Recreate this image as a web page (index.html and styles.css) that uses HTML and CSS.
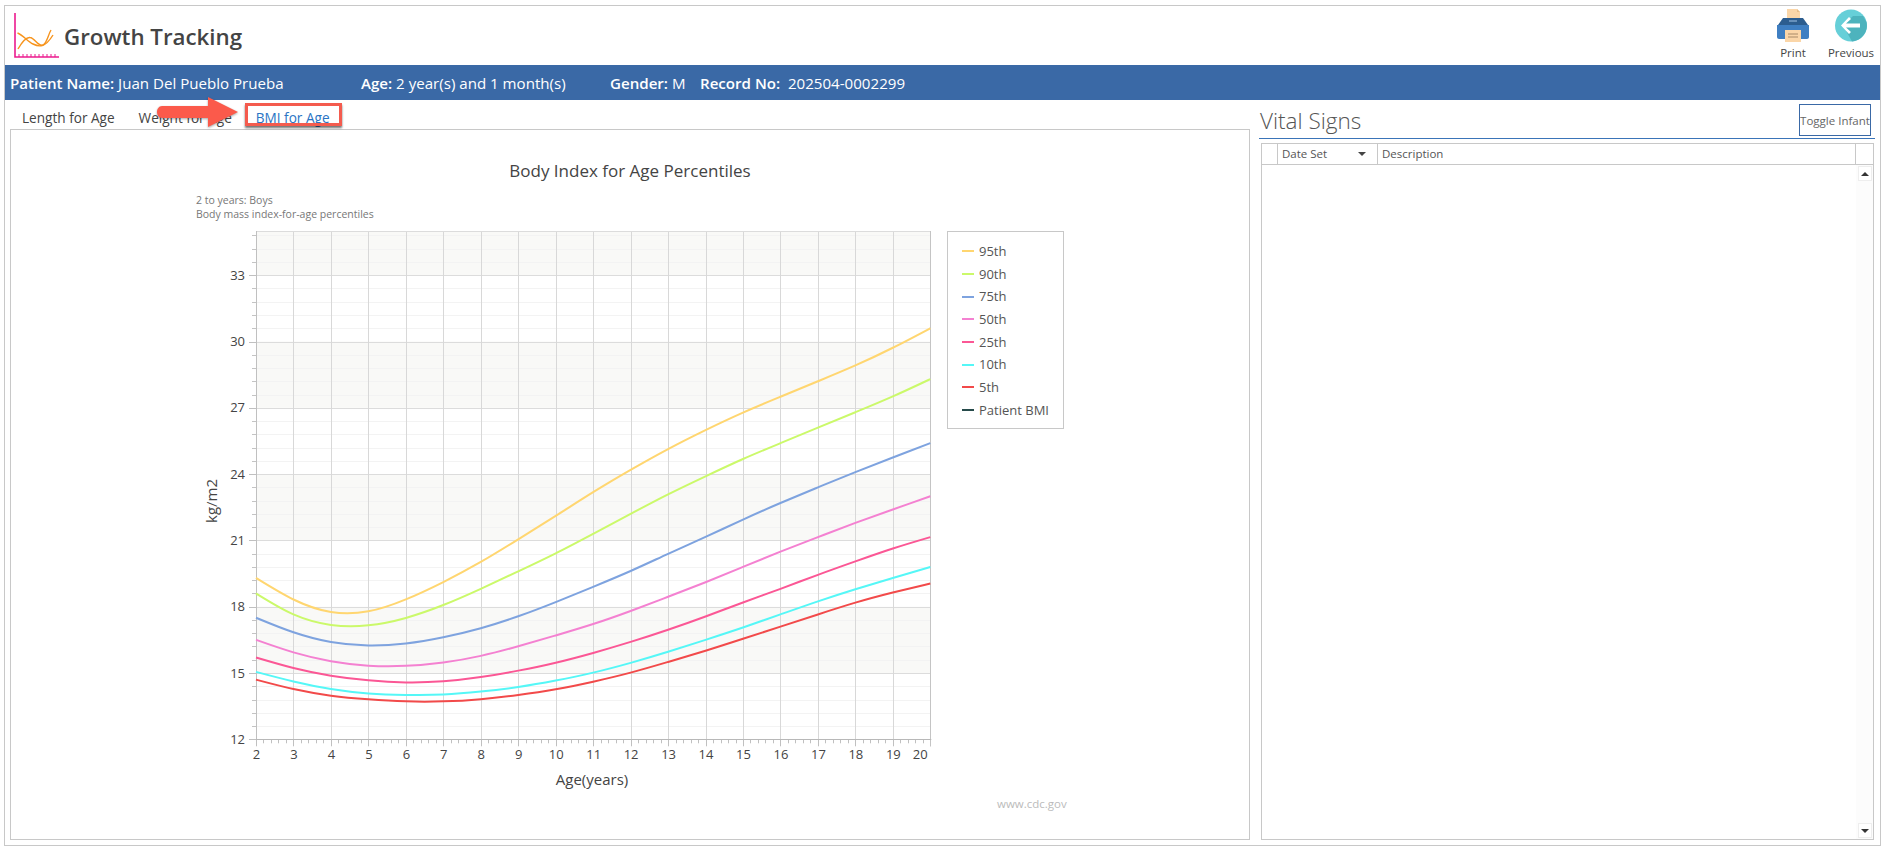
FILE: index.html
```html
<!DOCTYPE html>
<html lang="en">
<head>
<meta charset="utf-8">
<title>Growth Tracking</title>
<link rel="stylesheet" href="styles.css">
</head>
<body>
<div class="app">
  <header class="top">
    <svg class="logo" width="46" height="46" viewBox="0 0 46 46">
      <path d="M1 0V44H45" fill="none" stroke="#ec1b8e" stroke-width="1.6"/>
      <path d="M5 41V44M9 41V44M13 41V44M17 41V44M21 41V44M25 41V44M29 41V44M33 41V44M37 41V44M41 41V44" stroke="#ec1b8e" stroke-width="1"/>
      <path d="M3.5 20C9 22 14 29 19 31C25 34 31 35 39 22" fill="none" stroke="#f7941d" stroke-width="1.4"/>
      <path d="M4 36C8 29 12 24 16 24.5C21 25 24 34 29 32C33 30 34 22 37 17" fill="none" stroke="#f7941d" stroke-width="1.4"/>
    </svg>
    <h1 class="title">Growth Tracking</h1>
    <nav class="actions">
      <button class="action" type="button">
        <svg width="32" height="33" viewBox="0 0 32 33">
          <path d="M10 0H20L23 3V12H10Z" fill="#fbd6a8"/>
          <path d="M20 0L23 3H20Z" fill="#e8bd88"/>
          <path d="M6 9H26L31 16H1Z" fill="#2c5d8f"/>
          <path d="M0 16H32V28C32 29 31 30 30 30H2C1 30 0 29 0 28Z" fill="#3f7fc2"/>
          <path d="M12 12H20" stroke="#9fc3e6" stroke-width="1"/>
          <path d="M8 21H24V33H8Z" fill="#fbd6a8"/>
          <path d="M11 25H21M11 28H21" stroke="#a88a68" stroke-width="1"/>
        </svg>
        <span>Print</span>
      </button>
      <button class="action" type="button">
        <svg width="32" height="33" viewBox="0 0 32 33">
          <circle cx="16" cy="16.5" r="16" fill="#66cfd8"/>
          <path d="M8 16.5L18 7H28L31.5 13A16 16 0 0 1 17 32.5Z" fill="#4db3bd"/>
          <path d="M14 8L6 16.5L14 25L16 23L11 18.5H25V14.5H11L16 10Z" fill="#fff"/>
        </svg>
        <span>Previous</span>
      </button>
    </nav>
  </header>

  <div class="patient-bar">
    <span class="field field-name"><b>Patient Name:</b> Juan Del Pueblo Prueba</span>
    <span class="field field-age"><b>Age:</b> 2 year(s) and 1 month(s)</span>
    <span class="field field-gender"><b>Gender:</b> M</span>
    <span class="field"><b>Record No:</b> <span class="record">202504-0002299</span></span>
  </div>

  <main class="main">
    <section class="left">
      <div class="tabs">
        <span class="tab">Length for Age</span>
        <span class="tab">Weight for Age</span>
        <span class="tab tab-active">BMI for Age</span>
        <div class="callout-box"></div>
        <svg class="callout-arrow" width="90" height="36" viewBox="0 0 90 36">
          <path d="M8 10H54V1L84 16L54 31V22H8C5 22 3 19 3 16C3 13 5 10 8 10Z" fill="#fb5a4b"/>
        </svg>
      </div>
      <div class="chart-panel">
        <h2 class="chart-title">Body Index for Age Percentiles</h2>
        <p class="chart-sub">2 to years: Boys<br>Body mass index-for-age percentiles</p>
        <div class="chart-row">
          <svg id="plot" class="plot" width="744" height="570" viewBox="0 0 744 570"></svg>
          <ul class="legend">
            <li class="lg"><i class="sw c95"></i>95th</li>
            <li class="lg"><i class="sw c90"></i>90th</li>
            <li class="lg"><i class="sw c75"></i>75th</li>
            <li class="lg"><i class="sw c50"></i>50th</li>
            <li class="lg"><i class="sw c25"></i>25th</li>
            <li class="lg"><i class="sw c10"></i>10th</li>
            <li class="lg"><i class="sw c5"></i>5th</li>
            <li class="lg"><i class="sw cp"></i>Patient BMI</li>
          </ul>
        </div>
        <div class="source">www.cdc.gov</div>
      </div>
    </section>

    <aside class="right">
      <div class="vs-head">
        <h2 class="vs-title">Vital Signs</h2>
        <button class="toggle" type="button">Toggle Infant</button>
      </div>
      <div class="grid">
        <div class="grid-head">
          <div class="gh gh-sel"></div>
          <div class="gh gh-date">Date Set<i class="sort"></i></div>
          <div class="gh gh-desc">Description</div>
          <div class="gh-end"></div>
        </div>
        <div class="grid-body">
          <div class="scroll">
            <div class="sbtn"><i class="up"></i></div>
            <div class="sbtn"><i class="down"></i></div>
          </div>
        </div>
      </div>
    </aside>
  </main>
</div>
<script src="chart.js"></script>
</body>
</html>
```

FILE: styles.css
```css
* { box-sizing: border-box; }
html, body { margin: 0; padding: 0; background: #fff; }
body { font-family: "Open Sans", "Liberation Sans", sans-serif; color: #444; height: 850px; overflow: hidden; }

.app { margin: 5px 0 0 4px; width: 1877px; height: 841px; border: 1px solid #c8c8c8; display: flex; flex-direction: column; }

.top { height: 59px; display: flex; align-items: flex-start; }
.logo { margin: 7px 0 0 9px; flex: none; }
.title { margin: 15px 0 0 4px; font-size: 22.3px; line-height: 32px; font-weight: 600; color: #444; }
.actions { margin-left: auto; display: flex; }
.action { width: 58px; padding: 3px 0 0; border: 0; background: none; display: flex; flex-direction: column; align-items: center; font: inherit; font-size: 11.5px; color: #444; }
.action span { margin-top: 3px; line-height: 16px; }

.patient-bar { height: 35px; background: #3a69a6; color: #fff; display: flex; align-items: center; padding-left: 5px; font-size: 15.1px; white-space: nowrap; }
.patient-bar b { font-weight: 600; }
.field-name { width: 351px; }
.field-age { width: 249px; }
.field-gender { width: 90px; }
.record { margin-left: 4px; }

.main { flex: 1; min-height: 0; display: flex; gap: 9px; padding: 0 5px 5px 5px; }

.left { width: 1240px; flex: none; display: flex; flex-direction: column; }
.tabs { position: relative; height: 29px; display: flex; align-items: center; padding-top: 6px; font-size: 13.6px; }
.tab { padding: 0 12px; color: #444; }
.tab-active { color: #2a74c4; }
.callout-box { position: absolute; left: 235px; top: 3px; width: 97px; height: 23px; border: 3px solid #f45b4e; box-shadow: 0 2px 2px rgba(0,0,0,.55); }
.callout-arrow { position: absolute; left: 144px; top: -4px; filter: drop-shadow(0 1px 1px rgba(0,0,0,.35)); }

.chart-panel { flex: 1; border: 1px solid #c8c8c8; padding: 29px 0 0; }
.chart-title { margin: 0; text-align: center; font-size: 17px; line-height: 24px; font-weight: 400; color: #444; }
.chart-sub { margin: 10px 0 0 185px; font-size: 10.5px; line-height: 14px; color: #777; }
.chart-row { margin: 4px 0 0 185px; display: flex; align-items: flex-start; }
.plot { display: block; flex: none; }
.plot text { font-family: "Open Sans", "Liberation Sans", sans-serif; fill: #444; }
.legend { list-style: none; margin: 6px 0 0 7px; padding: 8px 0 0 14px; width: 117px; height: 198px; border: 1px solid #c8c8c8; font-size: 13px; color: #555; }
.lg { height: 22.7px; line-height: 22.7px; display: flex; align-items: center; white-space: nowrap; }
.sw { width: 12px; height: 2px; margin-right: 5px; flex: none; }
.c95 { background: #ffd670; } .c90 { background: #cbf96a; } .c75 { background: #7ea3df; } .c50 { background: #f481d1; }
.c25 { background: #fb5795; } .c10 { background: #55f7f7; } .c5 { background: #f24a4a; } .cp { background: #274b4b; }
.source { margin: 1px 0 0 986px; font-size: 11.5px; line-height: 16px; color: #bbb; }

.right { flex: 1; min-width: 0; display: flex; flex-direction: column; }
.vs-head { height: 39px; flex: none; border-bottom: 1px solid #3a74b8; display: flex; align-items: flex-start; justify-content: space-between; }
.vs-title { margin: 5px 0 0 1px; font-size: 22.5px; line-height: 32px; font-weight: 300; color: #555; }
.toggle { margin: 4px 4px 0 0; width: 72px; height: 32px; padding: 0; background: #fff; border: 1px solid #3a69a6; font: inherit; font-size: 11.5px; color: #666; white-space: nowrap; overflow: hidden; }

.grid { flex: 1; min-height: 0; margin: 4px 1px 0 2px; border: 1px solid #c8c8c8; display: flex; flex-direction: column; }
.grid-head { height: 21px; flex: none; display: flex; border-bottom: 1px solid #c8c8c8; font-size: 11.5px; line-height: 20px; color: #555; }
.gh { border-right: 1px solid #c8c8c8; padding-left: 4px; }
.gh-sel { width: 16px; }
.gh-date { width: 100px; position: relative; }
.gh-desc { flex: 1; }
.gh-end { width: 17px; }
.sort { position: absolute; right: 11px; top: 8px; border: 4px solid transparent; border-top: 4px solid #444; border-bottom: 0; }
.grid-body { flex: 1; min-height: 0; display: flex; justify-content: flex-end; }
.scroll { width: 17px; background: #fcfcfc; display: flex; flex-direction: column; justify-content: space-between; padding: 1px 1px 1px 2px; }
.sbtn { height: 15px; background: #fff; border: 1px solid #eee; display: flex; align-items: center; justify-content: center; }
.up { border: 4px solid transparent; border-bottom: 4px solid #333; border-top: 0; }
.down { border: 4px solid transparent; border-top: 4px solid #333; border-bottom: 0; }
```

FILE: chart.js
```js
(function () {
  var NS = "http://www.w3.org/2000/svg";
  var svg = document.getElementById("plot");
  var L = 60, R = 734.3, T = 6, B = 514.3;
  var sx = (R - L) / 18, sy = (B - T) / 23;
  function X(a) { return L + (a - 2) * sx; }
  function Y(v) { return B - (v - 12) * sy; }
  function px(n) { return Math.round(n) + 0.5; }
  function el(name, attrs, text) {
    var e = document.createElementNS(NS, name);
    for (var k in attrs) e.setAttribute(k, attrs[k]);
    if (text !== undefined) e.textContent = text;
    svg.appendChild(e);
    return e;
  }
  function line(x1, y1, x2, y2, c) {
    el("line", { x1: x1, y1: y1, x2: x2, y2: y2, stroke: c, "stroke-width": 1 });
  }

  // alternating bands
  [[33, 35], [27, 30], [21, 24], [15, 18]].forEach(function (b) {
    el("rect", { x: L, y: Y(b[1]), width: R - L, height: Y(b[0]) - Y(b[1]), fill: "#f9f9f7" });
  });

  // horizontal grid
  var v, i;
  for (i = 0; i <= 38; i++) {
    v = 12 + i * 0.6;
    if (i % 5 === 0) continue;
    if (v > 35) break;
    line(L, px(Y(v)), R, px(Y(v)), "#f3f3f3");
    line(L - 4, px(Y(v)), L, px(Y(v)), "#c4c4c4");
  }
  for (v = 15; v <= 33; v += 3) line(L, px(Y(v)), R, px(Y(v)), "#dcdcdc");
  for (v = 12; v <= 33; v += 3) {
    line(L - 7, px(Y(v)), L, px(Y(v)), "#c0c0c0");
    el("text", { x: 49, y: Y(v) + 4.5, "text-anchor": "end", "font-size": 13 }, String(v));
  }

  // vertical grid and ticks
  for (i = 3; i < 20; i++) line(px(X(i)), T, px(X(i)), B, "#d8d8d8");
  for (i = 2; i <= 20; i += 0.2) {
    var a = Math.round(i * 10) / 10;
    var major = Math.abs(a - Math.round(a)) < 0.01;
    line(px(X(a)), B, px(X(a)), B + (major ? 7 : 4), "#c0c0c0");
  }
  for (i = 2; i <= 20; i++) {
    el("text", { x: i === 20 ? X(20) - 10 : X(i) + 0.5, y: B + 20, "text-anchor": "middle", "font-size": 13 }, String(i));
  }

  // plot frame
  line(L, px(T), R, px(T), "#dcdcdc");
  line(px(L), T, px(L), B, "#c0c0c0");
  line(px(R), T, px(R), B + 7, "#c4c4c4");
  line(L, px(B), R + 1, px(B), "#b8b8b8");

  // axis titles
  el("text", { x: 396, y: 560, "text-anchor": "middle", "font-size": 15 }, "Age(years)");
  el("text", { "text-anchor": "middle", "font-size": 15, transform: "translate(21,276) rotate(-90)" }, "kg/m2");

  // percentile curves: one value per year, age 2 to 20
  var series = [
    ["#ffd670", [19.3, 18.25, 17.65, 17.7, 18.3, 19.1, 20.0, 21.05, 22.1, 23.2, 24.2, 25.15, 26.0, 26.8, 27.5, 28.2, 28.9, 29.7, 30.6]],
    ["#cbf96a", [18.6, 17.55, 17.1, 17.1, 17.45, 18.05, 18.8, 19.6, 20.4, 21.3, 22.2, 23.1, 23.9, 24.7, 25.4, 26.1, 26.8, 27.5, 28.3]],
    ["#7ea3df", [17.5, 16.8, 16.35, 16.2, 16.3, 16.6, 17.0, 17.55, 18.2, 18.9, 19.6, 20.4, 21.15, 21.95, 22.7, 23.4, 24.1, 24.75, 25.4]],
    ["#f481d1", [16.5, 15.9, 15.5, 15.3, 15.3, 15.45, 15.75, 16.2, 16.7, 17.2, 17.8, 18.45, 19.1, 19.8, 20.5, 21.15, 21.8, 22.4, 23.0]],
    ["#fb5795", [15.7, 15.2, 14.85, 14.65, 14.55, 14.6, 14.8, 15.1, 15.45, 15.9, 16.4, 16.95, 17.55, 18.2, 18.8, 19.45, 20.05, 20.65, 21.15]],
    ["#55f7f7", [15.05, 14.6, 14.25, 14.05, 14.0, 14.0, 14.15, 14.35, 14.65, 15.0, 15.45, 15.95, 16.5, 17.05, 17.65, 18.25, 18.8, 19.3, 19.8]],
    ["#f24a4a", [14.7, 14.25, 13.95, 13.8, 13.7, 13.7, 13.8, 14.0, 14.25, 14.6, 15.0, 15.5, 16.0, 16.55, 17.1, 17.65, 18.2, 18.65, 19.05]]
  ];
  function pair(a, b) { return a.toFixed(2) + " " + b.toFixed(2); }
  series.forEach(function (s) {
    var p = s[1].map(function (val, idx) { return [X(idx + 2), Y(val)]; });
    var n = p.length;
    // phantom end points make the uniform B-spline pass through both ends
    p.unshift([2 * p[0][0] - p[1][0], 2 * p[0][1] - p[1][1]]);
    p.push([2 * p[n][0] - p[n - 1][0], 2 * p[n][1] - p[n - 1][1]]);
    var d = "";
    for (var j = 1; j < p.length - 2; j++) {
      var a = p[j - 1], b = p[j], c = p[j + 1], e = p[j + 2];
      if (j === 1) d += "M" + pair((a[0] + 4 * b[0] + c[0]) / 6, (a[1] + 4 * b[1] + c[1]) / 6);
      d += "C" + pair((2 * b[0] + c[0]) / 3, (2 * b[1] + c[1]) / 3) +
        " " + pair((b[0] + 2 * c[0]) / 3, (b[1] + 2 * c[1]) / 3) +
        " " + pair((b[0] + 4 * c[0] + e[0]) / 6, (b[1] + 4 * c[1] + e[1]) / 6);
    }
    el("path", { d: d, fill: "none", stroke: s[0], "stroke-width": 2 });
  });
})();
```
